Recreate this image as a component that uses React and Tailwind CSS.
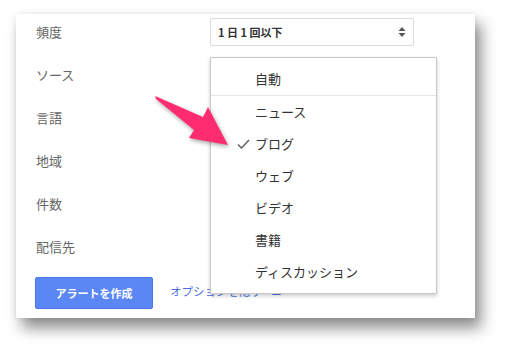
import React from "react";

const labels = ["頻度", "ソース", "言語", "地域", "件数", "配信先"];
const sources = ["ニュース", "ブログ", "ウェブ", "ビデオ", "書籍", "ディスカッション"];

export default function App() {
  return (
    <div
      className="relative w-[505px] h-[350px] bg-white overflow-hidden"
      style={{ fontFamily: '"Noto Sans CJK JP", "Noto Sans", sans-serif' }}
    >
      {/* alert card */}
      <div className="absolute left-[16px] top-[14px] w-[459px] h-[304px] bg-white shadow-[6px_10px_14px_rgba(0,0,0,0.45),0_0_6px_rgba(0,0,0,0.08)]">
        <div className="flex flex-col gap-[15px] pt-[4px] pl-[20px]">
          {labels.map((label, i) => (
            <div key={label} className="flex items-center h-[28px]">
              <div className="w-[174px] text-[13px] text-[#666]">{label}</div>
              {i === 0 && (
                <div className="flex items-center justify-between w-[204px] h-[28px] px-[7px] border border-[#dcdcdc] rounded-[2px] bg-white">
                  <span className="text-[11px] font-bold text-[#333]">1 日 1 回以下</span>
                  <svg width="8" height="12" viewBox="0 0 8 12">
                    <path d="M4 1 L7.5 5 L0.5 5 Z" fill="#555" />
                    <path d="M4 11 L7.5 7 L0.5 7 Z" fill="#555" />
                  </svg>
                </div>
              )}
            </div>
          ))}
        </div>

        <div className="flex items-center gap-[17px] mt-[16px] pl-[19px]">
          <button className="w-[118px] h-[32px] rounded-[2px] bg-[#5b87f5] border border-[#4a78ea] text-white text-[11px] font-bold">
            アラートを作成
          </button>
          <span className="flex items-center gap-[10px] -mt-[3px] text-[11.5px] text-[#4a6fe3]">
            オプションを隠す
            <svg width="9" height="6" viewBox="0 0 9 6">
              <path d="M4.5 0 L9 6 L0 6 Z" fill="#4a6fe3" />
            </svg>
          </span>
        </div>

        {/* source dropdown */}
        <div className="absolute left-[194px] top-[43px] w-[227px] h-[237px] bg-white border border-[#c8c8c8] shadow-[0_2px_4px_rgba(0,0,0,0.2)]">
          <div className="pt-[5px] border-b border-[#e5e5e5]">
            <div className="flex items-center h-[32px] pl-[44px] text-[13px] text-[#333]">自動</div>
          </div>
          {sources.map((s) => (
            <div key={s} className="relative flex items-center h-[32px] pl-[44px] text-[13px] text-[#333]">
              {s === "ブログ" && (
                <svg className="absolute left-[26px] top-[11px]" width="13" height="10" viewBox="0 0 13 10">
                  <path d="M1 5.5 L4.5 9 L12 1" fill="none" stroke="#666" strokeWidth="1.6" />
                </svg>
              )}
              {s}
            </div>
          ))}
        </div>
      </div>

      {/* pointer arrow */}
      <svg
        className="absolute left-0 top-0 drop-shadow-[1px_2px_2px_rgba(0,0,0,0.35)]"
        width="505"
        height="350"
        viewBox="0 0 505 350"
      >
        <polygon
          points="155,96 203,117 208,107 228,145 189,138 194,130 156,99"
          fill="#ff2d6f"
        />
      </svg>
    </div>
  );
}
